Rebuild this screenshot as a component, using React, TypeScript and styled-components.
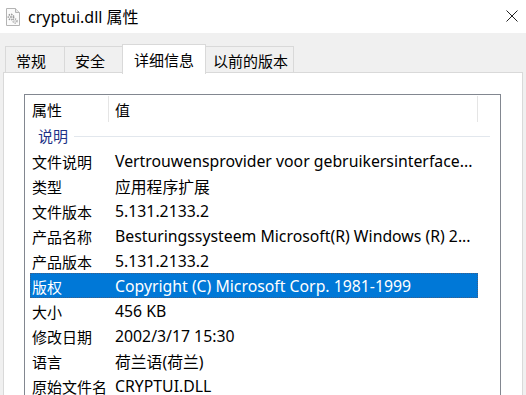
import React from "react";
import styled, { createGlobalStyle } from "styled-components";

const GlobalStyle = createGlobalStyle`
  html, body {
    margin: 0;
    padding: 0;
    background: #f0f0f0;
    overflow: hidden;
  }
  body {
    font-family: "Noto Sans", "Noto Sans CJK SC", sans-serif;
  }
`;

const rows = [
  { label: "文件说明", value: "Vertrouwensprovider voor gebruikersinterface..." },
  { label: "类型", value: "应用程序扩展" },
  { label: "文件版本", value: "5.131.2133.2" },
  { label: "产品名称", value: "Besturingssysteem Microsoft(R) Windows (R) 2..." },
  { label: "产品版本", value: "5.131.2133.2" },
  { label: "版权", value: "Copyright (C) Microsoft Corp. 1981-1999", selected: true },
  { label: "大小", value: "456 KB" },
  { label: "修改日期", value: "2002/3/17 15:30" },
  { label: "语言", value: "荷兰语(荷兰)" },
  { label: "原始文件名", value: "CRYPTUI.DLL" },
];

const tabs = [
  { name: "常规", width: 60, pad: 10 },
  { name: "安全", width: 59, pad: 10 },
  { name: "详细信息", width: 84, pad: 11, active: true },
  { name: "以前的版本", width: 89, pad: 7 },
];

const DllIcon = () => (
  <svg width="16" height="18" viewBox="0 0 16 18">
    <path d="M1.5 0.5 H10.5 L14.5 4.5 V17.5 H1.5 Z" fill="#fbfbfb" stroke="#b4b4b4" />
    <path d="M10.5 0.5 V4.5 H14.5" fill="#e8e8e8" stroke="#b4b4b4" />
    <circle cx="6" cy="9" r="2.6" fill="none" stroke="#9a9a9a" strokeWidth="1.6" strokeDasharray="1.4 1" />
    <circle cx="6" cy="9" r="0.9" fill="#9a9a9a" />
    <circle cx="10" cy="13" r="2" fill="none" stroke="#a8a8a8" strokeWidth="1.4" strokeDasharray="1.2 0.9" />
    <circle cx="10" cy="13" r="0.7" fill="#a8a8a8" />
  </svg>
);

const CloseIcon = () => (
  <svg width="12" height="12" viewBox="0 0 12 12">
    <path d="M0.5 0.5 L11.5 11.5 M11.5 0.5 L0.5 11.5" stroke="#222" strokeWidth="1" />
  </svg>
);

const App: React.FC = () => {
  return (
    <Window>
      <GlobalStyle />
      <TitleBar>
        <TitleLeft>
          <DllIcon />
          <TitleText>cryptui.dll 属性</TitleText>
        </TitleLeft>
        <CloseButton>
          <CloseIcon />
        </CloseButton>
      </TitleBar>
      <TabStrip>
        {tabs.map((t) => (
          <Tab key={t.name} active={t.active} tabWidth={t.width} padLeft={t.pad}>
            {t.name}
          </Tab>
        ))}
      </TabStrip>
      <TabPanel>
        <ListBox>
          <HeaderRow>
            <HeaderCell cellWidth={79}>属性</HeaderCell>
            <HeaderCell cellWidth={369}>值</HeaderCell>
          </HeaderRow>
          <GroupRow>
            <GroupLabel>说明</GroupLabel>
            <GroupLine />
          </GroupRow>
          {rows.map((r) => (
            <Row key={r.label} selected={r.selected}>
              <Label>{r.label}</Label>
              <Value>{r.value}</Value>
            </Row>
          ))}
        </ListBox>
      </TabPanel>
    </Window>
  );
};

const Window = styled.div`
  width: 526px;
  height: 395px;
  overflow: hidden;
  background: #f0f0f0;
  font-family: "Noto Sans", "Noto Sans CJK SC", sans-serif;
  color: #000;
`;

const TitleBar = styled.div`
  height: 33px;
  background: #fff;
  display: flex;
  align-items: center;
  justify-content: space-between;
  padding: 0 8px 0 5px;
`;

const TitleLeft = styled.div`
  display: flex;
  align-items: center;
  gap: 7px;
`;

const TitleText = styled.div`
  font-size: 16px;
  color: #000;
  margin-top: -2px;
`;

const CloseButton = styled.div`
  width: 12px;
  height: 12px;
  display: flex;
  margin-top: -2px;
`;

const TabStrip = styled.div`
  height: 40px;
  display: flex;
  align-items: flex-end;
  padding-left: 6px;
  position: relative;
  z-index: 1;
`;

const Tab = styled.div<{ active?: boolean; tabWidth: number; padLeft: number }>`
  box-sizing: border-box;
  width: ${({ tabWidth }) => tabWidth}px;
  height: ${({ active }) => (active ? 30 : 27)}px;
  margin-bottom: ${({ active }) => (active ? -1 : 0)}px;
  background: ${({ active }) => (active ? "#fff" : "#f0f0f0")};
  border: 1px solid #d9d9d9;
  border-bottom: ${({ active }) => (active ? "none" : "1px solid #d9d9d9")};
  margin-left: -1px;
  display: flex;
  align-items: center;
  justify-content: flex-start;
  padding-left: ${({ padLeft }) => padLeft}px;
  font-size: 15px;
  padding-top: ${({ active }) => (active ? 0 : 2)}px;
  font-family: "Noto Sans CJK SC", sans-serif;
`;

const TabPanel = styled.div`
  margin: -1px 3px 0 3px;
  background: #fff;
  border: 1px solid #d9d9d9;
  height: 400px;
  padding: 21px 0 0 20px;
`;

const ListBox = styled.div`
  box-sizing: border-box;
  width: 477px;
  height: 400px;
  border: 1px solid #828790;
  padding: 0 0 0 5px;
`;

const HeaderRow = styled.div`
  display: flex;
  height: 28px;
  align-items: stretch;
`;

const HeaderCell = styled.div<{ cellWidth: number }>`
  box-sizing: border-box;
  width: ${({ cellWidth }) => cellWidth}px;
  padding-left: 2px;
  border-right: 1px solid #e5e5e5;
  margin: 1px 0 1px 0;
  display: flex;
  align-items: center;
  font-size: 15px;
  font-family: "Noto Sans CJK SC", sans-serif;
  & + & {
    padding-left: 6px;
  }
`;

const GroupRow = styled.div`
  display: flex;
  align-items: center;
  height: 25px;
  padding-left: 8px;
  gap: 6px;
`;

const GroupLabel = styled.div`
  font-size: 15px;
  color: #1e3287;
  font-family: "Noto Sans CJK SC", sans-serif;
`;

const GroupLine = styled.div`
  width: 416px;
  height: 1px;
  background: #e2e7ed;
  margin-top: 1px;
`;

const Row = styled.div<{ selected?: boolean }>`
  box-sizing: border-box;
  width: 448px;
  height: 25px;
  display: flex;
  align-items: center;
  padding-left: 2px;
  padding-top: 1px;
  background: ${({ selected }) => (selected ? "#0078d7" : "transparent")};
  color: ${({ selected }) => (selected ? "#fff" : "#000")};
  outline: ${({ selected }) => (selected ? "1px dotted #3b5f8a" : "none")};
  outline-offset: -1px;
  font-size: 15px;
  white-space: nowrap;
`;

const Label = styled.div`
  width: 83px;
  font-family: "Noto Sans CJK SC", sans-serif;
`;

const Value = styled.div`
  font-size: 15.8px;
  font-family: "Noto Sans", "Noto Sans CJK SC", sans-serif;
`;

export default App;
